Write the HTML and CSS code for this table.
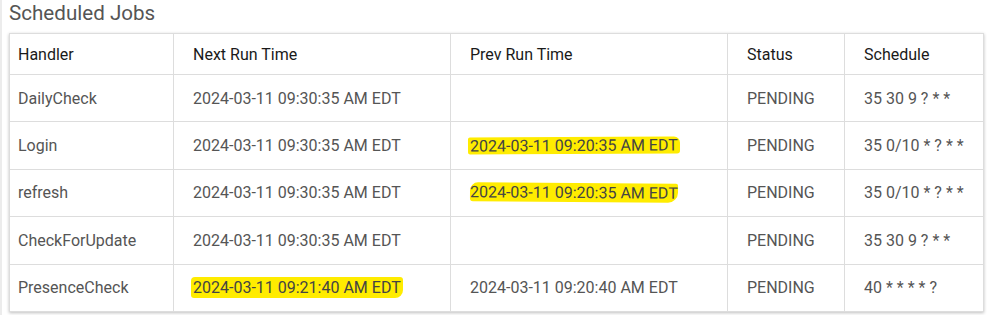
FILE: index.html
```html
<!DOCTYPE html>
<html>
<head>
<meta charset="utf-8">
<link rel="stylesheet" href="styles.css">
</head>
<body>
<div class="page">
  <h2 class="title">Scheduled Jobs</h2>
  <table class="jobs">
    <colgroup>
      <col class="c1"><col class="c2"><col class="c3"><col class="c4"><col class="c5">
    </colgroup>
    <thead>
      <tr><th>Handler</th><th>Next Run Time</th><th>Prev Run Time</th><th>Status</th><th>Schedule</th></tr>
    </thead>
    <tbody>
      <tr><td>DailyCheck</td><td>2024-03-11 09:30:35 AM EDT</td><td></td><td>PENDING</td><td>35 30 9 ? * *</td></tr>
      <tr><td>Login</td><td>2024-03-11 09:30:35 AM EDT</td><td><span class="hl hl-a">2024-03-11 09:20:35 AM EDT</span></td><td>PENDING</td><td>35 0/10 * ? * *</td></tr>
      <tr><td>refresh</td><td>2024-03-11 09:30:35 AM EDT</td><td><span class="hl hl-b">2024-03-11 09:20:35 AM EDT</span></td><td>PENDING</td><td>35 0/10 * ? * *</td></tr>
      <tr><td>CheckForUpdate</td><td>2024-03-11 09:30:35 AM EDT</td><td></td><td>PENDING</td><td>35 30 9 ? * *</td></tr>
      <tr><td>PresenceCheck</td><td><span class="hl hl-c">2024-03-11 09:21:40 AM EDT</span></td><td>2024-03-11 09:20:40 AM EDT</td><td>PENDING</td><td>40 * * * * ?</td></tr>
    </tbody>
  </table>
</div>
</body>
</html>
```

FILE: styles.css
```css
html, body {
  margin: 0;
  padding: 0;
  background: #ffffff;
}

.page {
  border-left: 2px solid #ececec;
  padding: 0 7px 0 7px;
  height: 315px;
  box-sizing: border-box;
  font-family: Roboto, "Liberation Sans", sans-serif;
}

.title {
  margin: 0;
  padding-top: 1px;
  height: 32px;
  font-size: 20.6px;
  font-weight: 400;
  color: #555555;
  line-height: 24px;
}

.jobs {
  width: 975px;
  border-collapse: collapse;
  table-layout: fixed;
  border: 1px solid #dddddd;
  box-shadow: 0 1px 3px rgba(0, 0, 0, 0.25);
  font-size: 16px;
}

.c1 { width: 164px; }
.c2 { width: 277px; }
.c3 { width: 277px; }
.c4 { width: 117px; }
.c5 { width: 139px; }

.jobs th,
.jobs td {
  border: 1px solid #dddddd;
  text-align: left;
  vertical-align: middle;
  padding: 0 0 0 19px;
  white-space: nowrap;
}

.jobs th:first-child,
.jobs td:first-child {
  padding-left: 8px;
}

.jobs th {
  font-weight: 400;
  color: #1a1a1a;
  height: 40px;
}

.jobs td {
  color: #555555;
  height: 46.4px;
}

.hl {
  display: inline-block;
  background: #ffec00;
  color: #444444;
  line-height: 17px;
}

.hl-a {
  margin-left: -2px;
  padding: 0 2px 0 2px;
  border-radius: 2px 6px 3px 2px;
  transform: rotate(-0.3deg);
}

.hl-b {
  padding: 1px 0 1px 0;
  border-radius: 8px 2px 10px 3px;
  transform: rotate(0.4deg);
}

.hl-c {
  margin-left: -2px;
  padding: 2px 2px 2px 2px;
  border-radius: 4px 3px 8px 3px;
}
```
